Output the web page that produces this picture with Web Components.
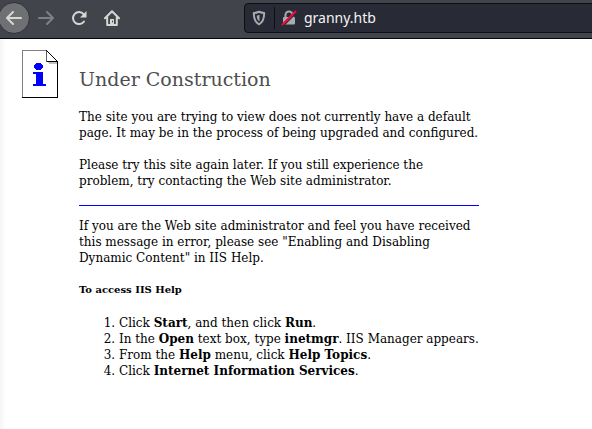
<!DOCTYPE html>
<html lang="en">
<head>
<meta charset="utf-8">
<title>Under Construction</title>
<style>
html, body { margin: 0; min-height: 100%; background: #fff; }
</style>
</head>
<body>
<browser-window>
  <browser-toolbar slot="toolbar" address="granny.htb"></browser-toolbar>
  <notice-page>
    <page-icon slot="icon"></page-icon>
    <span slot="title">Under Construction</span>
  </notice-page>
</browser-window>
<script>
function attach(el, html) {
  const t = document.createElement('template');
  t.innerHTML = html;
  el.attachShadow({ mode: 'open' }).append(t.content.cloneNode(true));
}

customElements.define('browser-window', class extends HTMLElement {
  constructor() {
    super();
    attach(this, `
      <style>
        :host { display: flex; flex-direction: column; min-height: 100vh; }
        main { flex: 1; background: linear-gradient(to right, #f6f6f6, #fff 6px); }
      </style>
      <slot name="toolbar"></slot>
      <main><slot></slot></main>`);
  }
});

customElements.define('browser-toolbar', class extends HTMLElement {
  constructor() {
    super();
    attach(this, `
      <style>
        :host { display: flex; align-items: center; height: 38px; background: #42444b; border-bottom: 1px solid #050508; color: #d6d6d3; overflow: hidden; }
        nav { display: flex; align-items: center; flex: 0 0 244px; box-sizing: border-box; padding-bottom: 2px; margin-left: -2px; margin-right: 2px; }
        button { display: grid; place-items: center; width: 32px; height: 32px; margin-right: 1px; padding: 0; border: 0; background: none; color: inherit; }
        button.back { box-sizing: border-box; margin-right: 0; border: 1px solid #2f3137; border-radius: 50%; background: #6f7074; }
        button.off { color: #7f8084; }
        svg { display: block; fill: none; stroke: currentColor; stroke-width: 2; stroke-linecap: round; stroke-linejoin: round; }
        form { display: flex; align-items: center; flex: 1; min-width: 0; box-sizing: border-box; height: 30px; margin: 0 -4px 2px 0; border: 1px solid #0e0f14; border-radius: 4px; background: #282a36; color: #a9aaad; }
        .shield { padding: 0 7px 0 6px; }
        .lock { padding: 0 7px 0 6px; border-left: 1px solid #0e0f14; height: 22px; display: flex; align-items: center; }
        input { flex: 1; min-width: 0; padding: 0; border: 0; outline: 0; background: none; color: #f4f4f2; font: 14px/20px "Noto Sans", sans-serif; }
      </style>
      <nav>
        <button class="back" aria-label="Back"><svg width="16" height="16" viewBox="0 0 16 16"><path d="M7 2 1 8l6 6M1 8h14"/></svg></button>
        <button class="off" aria-label="Forward"><svg width="16" height="16" viewBox="0 0 16 16"><path d="M9 2l6 6-6 6M15 8H1"/></svg></button>
        <button aria-label="Reload"><svg width="16" height="16" viewBox="0 0 16 16"><path d="M13 11.500A6 6 0 1 1 12.600 4.200"/><path d="M15.500 1v6.500H9z" fill="currentColor" stroke="none"/></svg></button>
        <button aria-label="Home"><svg width="16" height="16" viewBox="0 0 16 16"><path d="M1 8.300 8 1.300l7 7M3.200 7.500V15h9.600V7.500"/><path d="M6 9h4v5.500H6z" fill="currentColor" stroke="none"/><path d="M8.500 11v1" stroke="#42444b" stroke-width="1"/></svg></button>
      </nav>
      <form onsubmit="return false">
        <svg class="shield" width="16" height="16" viewBox="0 0 16 16"><path d="M8 1.800c2 .8 3.400 1.200 5.200 1.300C13.200 9 12 12.300 8 14.300 4 12.300 2.800 9 2.800 3.100 4.600 3 6 2.600 8 1.800z"/><path d="M8.500 4.800v6.500c-1.900-1-2.700-3-2.800-5.600z" fill="currentColor" stroke="none"/></svg>
        <span class="lock"><svg width="16" height="16" viewBox="0 0 16 16"><path d="M4.500 8V5a3.500 3.500 0 0 1 7 0v3"/><rect x="2" y="7" width="12" height="7.500" rx="1" fill="currentColor" stroke="none"/><path d="M2.500 15.500 15.500 2.500" stroke="#282a36" stroke-width="1.500"/><path d="M1.500 14.500 14.500 1.500" stroke="#ee0a3a" stroke-width="2"/></svg></span>
        <input aria-label="Address" spellcheck="false">
      </form>`);
    this.shadowRoot.querySelector('input').value = this.getAttribute('address');
  }
});

customElements.define('page-icon', class extends HTMLElement {
  constructor() {
    super();
    attach(this, `
      <style>:host { display: block; } svg { display: block; }</style>
      <svg width="36" height="48" viewBox="0 0 36 48" shape-rendering="crispEdges">
        <path d="M0 0h25l11 11v37H0z" fill="#fff"/>
        <path d="M0 0h25v1H1v46H0z" fill="#808080"/>
        <path d="M25 12h10v2H27z" fill="#c0c0c0"/>
        <path d="M0 47h36v1H0zM35 11h1v37h-1zM24 11h12v1H24z" fill="#000"/>
        <path d="M24 0h1v12h-1z" fill="#606060"/>
        <path d="M24.500.5l11 11" stroke="#000" stroke-width="1.400"/>
        <g fill="#00f"><ellipse cx="16.500" cy="16.500" rx="4.500" ry="3.500"/><path d="M11 22h10v12h3v2H11v-2h3V24h-3z"/></g>
      </svg>`);
  }
});

customElements.define('notice-page', class extends HTMLElement {
  constructor() {
    super();
    attach(this, `
      <style>
        :host { display: grid; grid-template-columns: 36px minmax(0, 400px); column-gap: 21px; padding: 11px 22px; font: 12px/16px "DejaVu Serif", serif; color: #000; }
        article { padding-top: 17px; }
        h1 { margin: 0 0 18px; font: 19px/24px "DejaVu Serif", serif; color: #4e4e4e; }
        p { margin: 0 0 16px; }
        hr { margin: 0 0 12px; border: 0; border-top: 1px solid #00f; }
        h5 { margin: 0 0 17px; font: bold 10px/16px "DejaVu Serif", serif; }
        ol { margin: 0; padding-left: 40px; }
      </style>
      <slot name="icon"></slot>
      <article>
        <h1><slot name="title"></slot></h1>
        <p>The site you are trying to view does not currently have a default page. It may be in the process of being upgraded and configured.</p>
        <p>Please try this site again later. If you still experience the problem, try contacting the Web site administrator.</p>
        <hr>
        <p>If you are the Web site administrator and feel you have received this message in error, please see "Enabling and Disabling Dynamic Content" in IIS Help.</p>
        <h5>To access IIS Help</h5>
        <ol>
          <li>Click <b>Start</b>, and then click <b>Run</b>.</li>
          <li>In the <b>Open</b> text box, type <b>inetmgr</b>. IIS Manager appears.</li>
          <li>From the <b>Help</b> menu, click <b>Help Topics</b>.</li>
          <li>Click <b>Internet Information Services</b>.</li>
        </ol>
      </article>`);
  }
});
</script>
</body>
</html>
